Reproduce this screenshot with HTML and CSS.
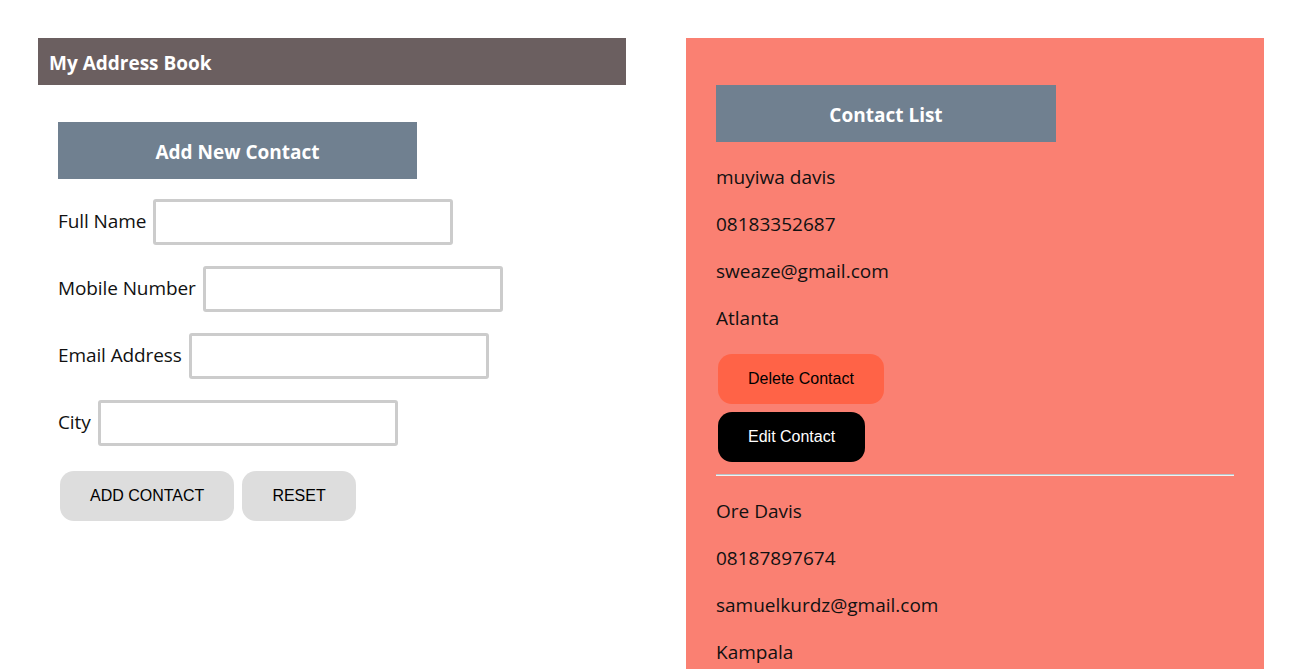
FILE: index.html
```html
<!DOCTYPE html>
<html>
<head>
<meta charset="utf-8">
<title>My Address Book</title>
<link rel="stylesheet" href="styles.css">
</head>
<body>
<div class="page">
  <section class="left">
    <header class="app-header">My Address Book</header>
    <div class="form-area">
      <div class="form-title">Add New Contact</div>
      <div class="row"><label class="lbl">Full Name</label><input class="field" type="text"></div>
      <div class="row"><label class="lbl">Mobile Number</label><input class="field" type="text"></div>
      <div class="row"><label class="lbl">Email Address</label><input class="field" type="text"></div>
      <div class="row"><label class="lbl">City</label><input class="field" type="text"></div>
      <div class="actions">
        <button class="btn btn-grey">ADD CONTACT</button>
        <button class="btn btn-grey">RESET</button>
      </div>
    </div>
  </section>
  <section class="right">
    <div class="list-title">Contact List</div>
    <div class="contact">
      <div class="info">muyiwa davis</div>
      <div class="info">08183352687</div>
      <div class="info">sweaze@gmail.com</div>
      <div class="info">Atlanta</div>
      <div class="contact-actions">
        <button class="btn btn-delete">Delete Contact</button>
        <button class="btn btn-edit">Edit Contact</button>
      </div>
    </div>
    <hr class="divider">
    <div class="contact">
      <div class="info">Ore Davis</div>
      <div class="info">08187897674</div>
      <div class="info">samuelkurdz@gmail.com</div>
      <div class="info">Kampala</div>
    </div>
  </section>
</div>
</body>
</html>
```

FILE: styles.css
```css
html, body {
  margin: 0;
  padding: 0;
  background: #fff;
  font-family: "Segoe UI", "Open Sans", "Noto Sans", sans-serif;
  color: #111;
}

.page {
  display: flex;
  align-items: flex-start;
  gap: 60px;
  padding: 38px 0 0 38px;
  height: 631px;
  overflow: hidden;
}

.left {
  width: 588px;
}

.app-header {
  box-sizing: border-box;
  height: 47px;
  line-height: 43px;
  padding-top: 4px;
  padding-left: 11px;
  background: #6b5f60;
  color: #fff;
  font-weight: 700;
  font-size: 19px;
}

.form-area {
  padding-left: 20px;
  padding-top: 37px;
}

.form-title {
  box-sizing: border-box;
  width: 359px;
  height: 57px;
  line-height: 53px;
  padding-top: 4px;
  background: #708090;
  color: #fff;
  font-weight: 700;
  font-size: 19px;
  text-align: center;
}

.row {
  display: flex;
  align-items: center;
  margin-top: 20px;
  height: 46px;
}

.row + .row {
  margin-top: 21px;
}

.lbl {
  font-size: 19px;
  color: #111;
  margin-right: 7px;
  letter-spacing: -0.1px;
  padding-bottom: 2px;
}

.field {
  box-sizing: border-box;
  width: 300px;
  height: 46px;
  border: 3px solid #cccccc;
  border-radius: 3px;
  background: #fff;
  margin: 0;
  padding: 0 8px;
  font-size: 16px;
}

.actions {
  display: flex;
  gap: 8px;
  margin-top: 25px;
  padding-left: 2px;
}

.btn {
  font-family: "Liberation Sans", Arial, sans-serif;
  font-size: 16px;
  border: none;
  border-radius: 14px;
  padding: 0 30px;
  height: 50px;
  cursor: pointer;
}

.btn-grey {
  background: #dddddd;
  color: #000;
}

.right {
  box-sizing: border-box;
  width: 578px;
  min-height: 700px;
  background: #fa8072;
  padding: 47px 30px 0 30px;
}

.list-title {
  box-sizing: border-box;
  width: 340px;
  height: 57px;
  line-height: 53px;
  padding-top: 4px;
  background: #708090;
  color: #fff;
  font-weight: 700;
  font-size: 19px;
  text-align: center;
}

.contact {
  display: flex;
  flex-direction: column;
  gap: 20px;
  padding-top: 22px;
}

.info {
  font-size: 19px;
  line-height: 27px;
  color: #111;
}

.contact-actions {
  display: flex;
  flex-direction: column;
  align-items: flex-start;
  gap: 8px;
  padding-left: 2px;
  margin-top: 2px;
}

.btn-delete {
  background: #ff6347;
  color: #000;
}

.btn-edit {
  background: #000;
  color: #fff;
}

.divider {
  border: none;
  border-top: 1px solid #b8c4c8;
  border-bottom: 1px solid #f2f2f2;
  margin: 12px 0 0 0;
  height: 0;
}
```
